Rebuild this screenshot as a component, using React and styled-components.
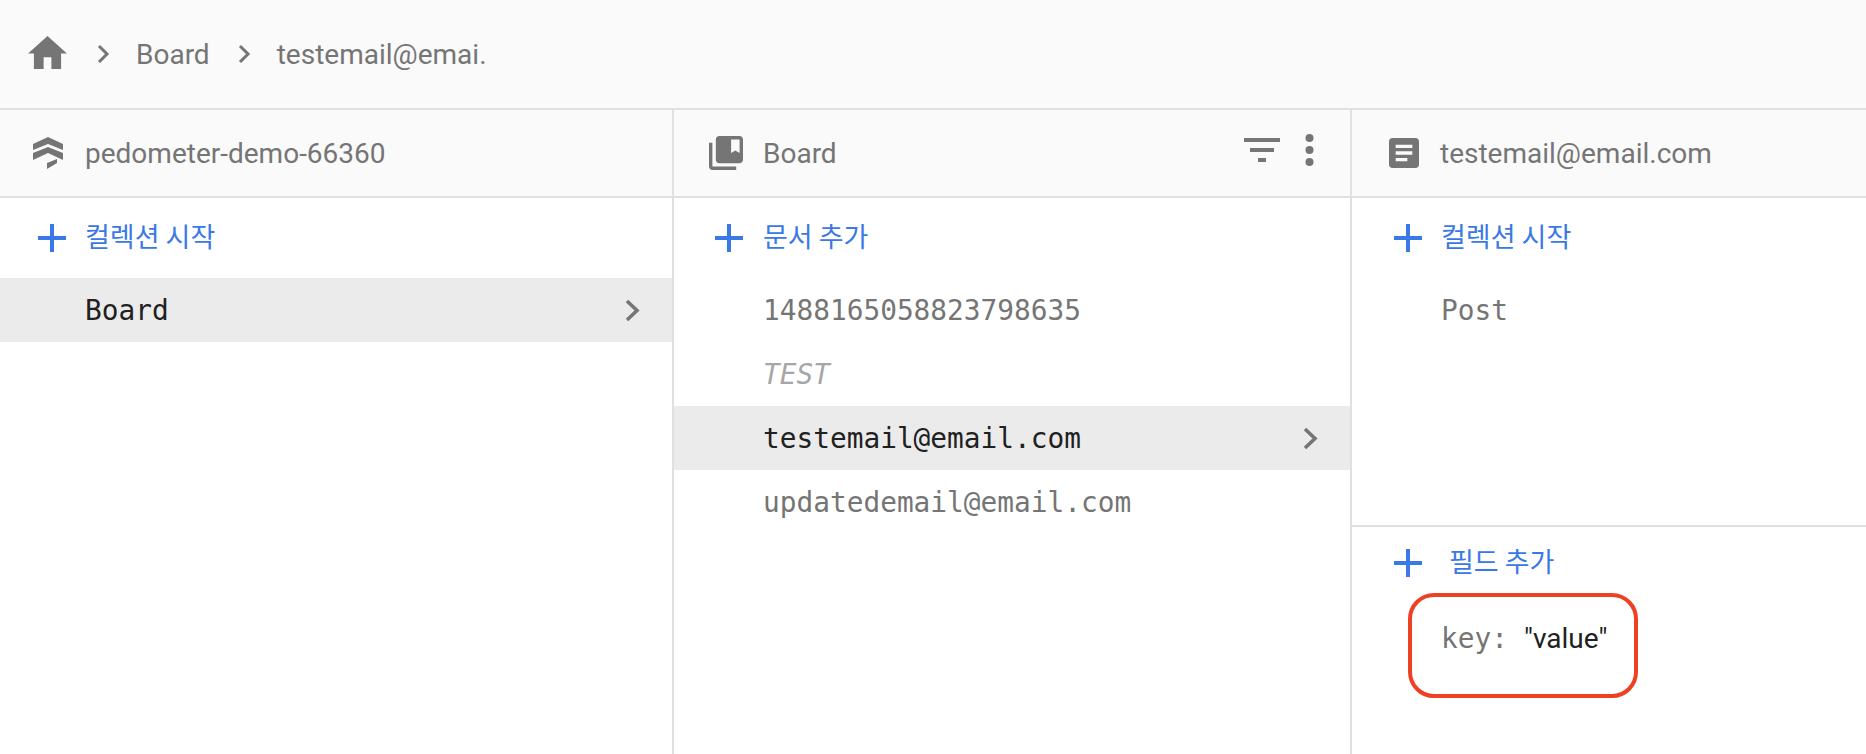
import React from "react"
import styled, { createGlobalStyle } from "styled-components"

const GlobalStyle = createGlobalStyle`
  html, body {
    margin: 0;
    padding: 0;
    background: #fff;
  }
  body {
    font-family: Roboto, "Noto Sans CJK KR", sans-serif;
    overflow: hidden;
  }
`

const Page = styled.div`
  width: 1866px;
  height: 754px;
  display: flex;
  flex-direction: column;
`

// Breadcrumb
const Crumbs = styled.nav`
  height: 108px;
  flex: none;
  display: flex;
  align-items: center;
  padding-left: 28px;
  background: #fafafa;
  border-bottom: 2px solid #e0e0e0;
  color: #757575;
  font-size: 28px;
`
const CrumbSep = styled.svg`
  width: 13px;
  height: 20px;
  margin: 0 26px 0 ${(p) => p.$left}px;
  fill: none;
  stroke: #757575;
  stroke-width: 3;
`
const HomeIcon = styled.svg`
  width: 39px;
  height: 33px;
  margin-top: -3px;
  fill: #757575;
`

// Columns
const Columns = styled.div`
  flex: 1;
  min-height: 0;
  display: grid;
  grid-template-columns: 674px 678px 1fr;
`
const Column = styled.section`
  display: flex;
  flex-direction: column;
  min-width: 0;
  border-right: ${(p) => (p.$last ? "none" : "2px solid #e0e0e0")};
`
const ColumnHeader = styled.header`
  height: 86px;
  flex: none;
  display: flex;
  align-items: center;
  gap: ${(p) => p.$gap}px;
  padding-left: ${(p) => p.$pad}px;
  background: #fafafa;
  border-bottom: 2px solid #e0e0e0;
  color: #757575;
  font-size: 28px;
`
const HeaderActions = styled.div`
  margin-left: auto;
  display: flex;
  align-items: center;
  gap: 25px;
  padding-right: 36px;
  margin-top: -7px;
`
const Glyph = styled.svg`
  flex: none;
  display: block;
  fill: #757575;
`
const AddRow = styled.div`
  height: ${(p) => p.$h || 80}px;
  flex: none;
  display: flex;
  align-items: center;
  gap: ${(p) => p.$gap}px;
  padding-left: ${(p) => p.$pad}px;
  color: #3b78e7;
  font-family: "Noto Sans CJK KR", sans-serif;
  font-size: 27px;
`
const AddLabel = styled.span`
  margin-top: -5px;
`
const Plus = styled.svg`
  flex: none;
  width: 28px;
  height: 28px;
  fill: #3b78e7;
`
const Item = styled.div`
  height: 64px;
  flex: none;
  display: flex;
  align-items: center;
  justify-content: space-between;
  padding: 0 32px 0 ${(p) => p.$indent}px;
  background: ${(p) => (p.$active ? "#ebebeb" : "transparent")};
  color: ${(p) => (p.$active ? "#212121" : p.$ghost ? "#a6a6a6" : "#757575")};
  font-family: "DejaVu Sans Mono", monospace;
  font-style: ${(p) => (p.$ghost ? "italic" : "normal")};
  font-size: 27.8px;
`
const RowChevron = styled.svg`
  width: 15px;
  height: 23px;
  fill: none;
  stroke: #757575;
  stroke-width: 3.6;
`
const Upper = styled.div`
  height: 327px;
  flex: none;
  border-bottom: 2px solid #e0e0e0;
`
const Field = styled.div`
  width: 230px;
  height: 105px;
  box-sizing: border-box;
  margin: -6px 0 0 56px;
  padding: 23px 0 38px 29px;
  display: flex;
  align-items: center;
  align-self: flex-start;
  border: 4px solid #ee4023;
  border-radius: 26px;
`
const FieldKey = styled.span`
  color: #757575;
  font-family: "DejaVu Sans Mono", monospace;
  font-size: 27.8px;
`
const FieldValue = styled.span`
  margin-left: 16px;
  color: #212121;
  font-size: 28px;
`

const Chevron = () => (
  <RowChevron viewBox="0 0 15 23">
    <path d="M2 2l10 9.5L2 21" />
  </RowChevron>
)

const PlusIcon = () => (
  <Plus viewBox="0 0 28 28">
    <path d="M12 0h4v12h12v4H16v12h-4V16H0v-4h12z" />
  </Plus>
)

const App = () => (
  <Page>
    <GlobalStyle />
    <Crumbs>
      <HomeIcon viewBox="2 3 20 17">
        <path d="M10 20v-6h4v6h5v-8h3L12 3 2 12h3v8z" />
      </HomeIcon>
      <CrumbSep $left={30} viewBox="0 0 13 20">
        <path d="M2 2l8 8-8 8" />
      </CrumbSep>
      <span>Board</span>
      <CrumbSep $left={28} viewBox="0 0 13 20">
        <path d="M2 2l8 8-8 8" />
      </CrumbSep>
      <span>testemail@emai.</span>
    </Crumbs>
    <Columns>
      <Column>
        <ColumnHeader $pad={33} $gap={22}>
          <Glyph width="30" height="32" viewBox="0 0 30 32">
            <path d="M0 7L15 0l15 7v6L15 7 0 13z" />
            <path d="M0 16l15-6 15 6v7L15 16 0 23z" />
            <path d="M14 26l10-4v4l-10 6z" />
          </Glyph>
          <span>pedometer-demo-66360</span>
        </ColumnHeader>
        <AddRow $pad={38} $gap={19}>
          <PlusIcon />
          <AddLabel>컬렉션 시작</AddLabel>
        </AddRow>
        <Item $active $indent={85}>
          <span>Board</span>
          <Chevron />
        </Item>
      </Column>
      <Column>
        <ColumnHeader $pad={35} $gap={20}>
          <Glyph width="34" height="34" viewBox="2 2 20 20">
            <path d="M4 6H2v14c0 1.1.9 2 2 2h14v-2H4V6zm16-4H8c-1.1 0-2 .9-2 2v12c0 1.1.9 2 2 2h12c1.1 0 2-.9 2-2V4c0-1.1-.9-2-2-2zm0 10l-2.5-1.5L15 12V4h5v8z" />
          </Glyph>
          <span>Board</span>
          <HeaderActions>
            <Glyph width="36" height="24" viewBox="3 6 18 12">
              <path d="M10 18h4v-2h-4v2zM3 6v2h18V6H3zm3 7h12v-2H6v2z" />
            </Glyph>
            <Glyph width="9" height="32" viewBox="0 0 9 32">
              <circle cx="4.5" cy="4" r="4" />
              <circle cx="4.5" cy="16" r="4" />
              <circle cx="4.5" cy="28" r="4" />
            </Glyph>
          </HeaderActions>
        </ColumnHeader>
        <AddRow $pad={41} $gap={20}>
          <PlusIcon />
          <AddLabel>문서 추가</AddLabel>
        </AddRow>
        <Item $indent={89}>1488165058823798635</Item>
        <Item $ghost $indent={89}>TEST</Item>
        <Item $active $indent={89}>
          <span>testemail@email.com</span>
          <Chevron />
        </Item>
        <Item $indent={89}>updatedemail@email.com</Item>
      </Column>
      <Column $last>
        <ColumnHeader $pad={37} $gap={21}>
          <Glyph width="30" height="30" viewBox="3 3 18 18">
            <path d="M19 3H5c-1.1 0-2 .9-2 2v14c0 1.1.9 2 2 2h14c1.1 0 2-.9 2-2V5c0-1.1-.9-2-2-2zm-5 14H7v-2h7v2zm3-4H7v-2h10v2zm0-4H7V7h10v2z" />
          </Glyph>
          <span>testemail@email.com</span>
        </ColumnHeader>
        <Upper>
          <AddRow $pad={42} $gap={19}>
            <PlusIcon />
            <AddLabel>컬렉션 시작</AddLabel>
          </AddRow>
          <Item $indent={89}>Post</Item>
        </Upper>
        <AddRow $h={72} $pad={42} $gap={27}>
          <PlusIcon />
          <AddLabel>필드 추가</AddLabel>
        </AddRow>
        <Field>
          <FieldKey>key:</FieldKey>
          <FieldValue>"value"</FieldValue>
        </Field>
      </Column>
    </Columns>
  </Page>
)

export default App
